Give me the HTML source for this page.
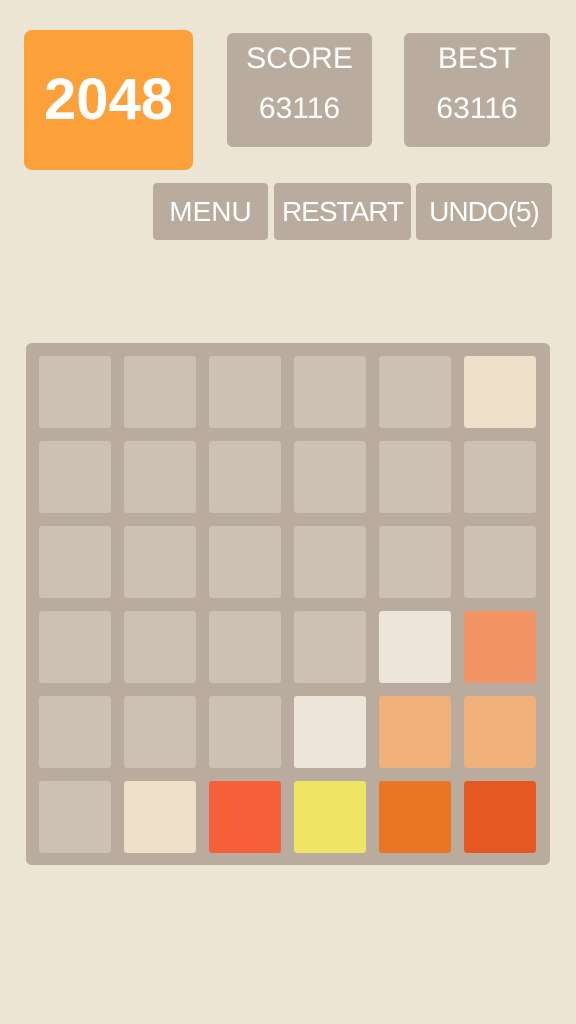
<!DOCTYPE html><html><head><style>
body{margin:0;width:576px;height:1024px;background:#ede5d3;font-family:"Liberation Sans","DejaVu Sans",sans-serif;position:relative;overflow:hidden}
.a{position:absolute;border-radius:6px;color:#fff;text-align:center}
.s{background:#b9ac9f}
.t{position:absolute;width:72px;height:72px;border-radius:3px;background:#cdc1b3}
</style></head><body>
<div class="a" style="left:24px;top:30px;width:169px;height:140px;background:#fca03a;border-radius:8px;font-weight:bold;font-size:58px;line-height:140px">2048</div>
<div class="a s" style="left:227px;top:33px;width:145px;height:114px;font-size:30px"><div style="margin-top:9px">SCORE</div><div style="margin-top:16px">63116</div></div>
<div class="a s" style="left:404px;top:33px;width:146px;height:114px;font-size:30px"><div style="margin-top:9px">BEST</div><div style="margin-top:16px">63116</div></div>
<div class="a s" style="left:153px;top:183px;width:115px;height:57px;font-size:28px;line-height:57px;border-radius:4px">MENU</div>
<div class="a s" style="left:274px;top:183px;width:137px;height:57px;font-size:28px;line-height:57px;border-radius:4px;letter-spacing:-1px">RESTART</div>
<div class="a s" style="left:416px;top:183px;width:136px;height:57px;font-size:28px;line-height:57px;border-radius:4px;letter-spacing:-1px">UNDO(5)</div>
<div style="position:absolute;left:26px;top:343px;width:524px;height:522px;background:#b9ab9e;border-radius:6px"></div>
<div id="g"></div>
<script>
var c={"0,5":"#eee1c9","3,4":"#ede4da","3,5":"#f39465","4,3":"#ede4da","4,4":"#f0b07a","4,5":"#f0b07a","5,1":"#ede1c9","5,2":"#f55f3a","5,3":"#ede563","5,4":"#e97622","5,5":"#e65723"};
var h="";for(var r=0;r<6;r++)for(var k=0;k<6;k++){var b=c[r+","+k];h+='<div class="t" style="left:'+(39+k*85)+'px;top:'+(356+r*85)+'px;'+(b?'background:'+b:'')+'"></div>';}
document.getElementById("g").innerHTML=h;
</script>
</body></html>
